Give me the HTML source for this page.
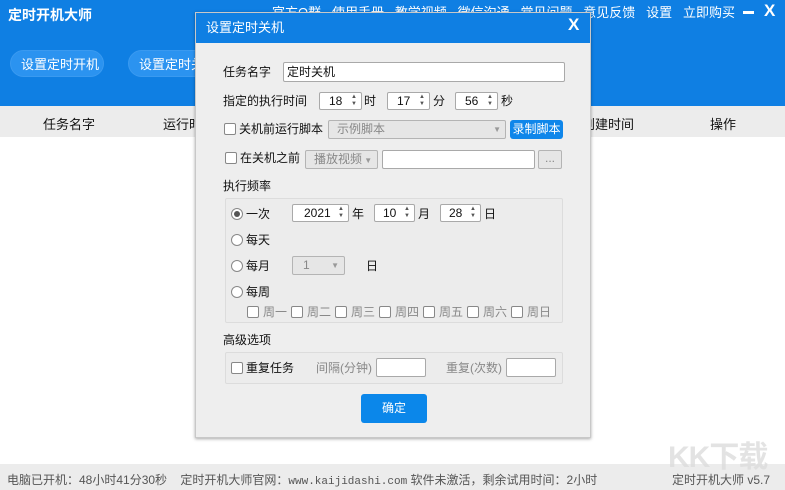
<!DOCTYPE html>
<html><head><meta charset="utf-8"><style>
*{margin:0;padding:0;box-sizing:border-box}
body{width:785px;height:490px;overflow:hidden;background:#fff;font-family:"Liberation Sans","Noto Sans CJK SC",sans-serif;font-size:12px;color:#111;position:relative}
.a{position:absolute;white-space:nowrap}
.dlg .a{margin-top:-1px}
.dlg .dt{margin-top:0}
.hdr{left:0;top:0;width:785px;height:106px;background:#0f7fe3}
.th{left:0;top:106px;width:785px;height:31px;background:#ececec}
.status{left:0;top:464px;width:785px;height:26px;background:#ececec;color:#555;font-size:12px}
.pill{height:27px;border-radius:14px;background:#2b93f0;color:#fff;font-size:13px;line-height:27px;padding-left:10px;border:1px solid #3a9af0}
.dlg{left:195px;top:12px;width:396px;height:426px;background:#eeeeee;border:1px solid #c8c8c8;box-shadow:0 1px 3px rgba(0,0,0,.35)}
.dt{left:0;top:0;width:394px;height:30px;background:#0f7fe3;color:#fff;font-size:13px;line-height:30px;padding-left:10px}
.in{background:#fff;border:1px solid #a9a9a9;border-radius:2px}
.spin{background:#fff;border:1px solid #a9a9a9;border-radius:2px;height:18px;line-height:16px;font-size:12px}
.spin i{position:absolute;right:4px;top:1px;font-style:normal;font-size:6px;line-height:7px;color:#555}
.cb{width:12px;height:12px;background:#fff;border:1px solid #888;border-radius:2px}
.rb{width:12px;height:12px;background:#fff;border:1px solid #888;border-radius:50%}
.sel{background:#e6e6e6;border:1px solid #b4b4b4;border-radius:2px;color:#888;font-size:12px}
.grp{border:1px solid #dcdcdc;border-radius:2px;background:#ececec}
.gray{color:#888}
</style></head><body>
<div class="a hdr"></div>
<div class="a" style="left:8px;top:5px;color:#fff;font-size:14px;font-weight:bold;line-height:20px">定时开机大师</div>
<div class="a" style="left:272px;top:4px;color:#fff;font-size:13px;line-height:18px;word-spacing:0">官方Q群&nbsp;&nbsp;&nbsp;使用手册&nbsp;&nbsp;&nbsp;教学视频&nbsp;&nbsp;&nbsp;微信沟通&nbsp;&nbsp;&nbsp;常见问题&nbsp;&nbsp;&nbsp;意见反馈&nbsp;&nbsp;&nbsp;设置&nbsp;&nbsp;&nbsp;立即购买</div>
<div class="a" style="left:743px;top:11px;width:11px;height:3px;background:#fff"></div>
<div class="a" style="left:764px;top:1px;color:#fff;font-size:17px;font-weight:bold">X</div>
<div class="a pill" style="left:10px;top:50px;width:94px">设置定时开机</div>
<div class="a pill" style="left:128px;top:50px;width:94px">设置定时关机</div>
<div class="a th"></div>
<div class="a" style="left:43px;top:114px;font-size:13px">任务名字</div>
<div class="a" style="left:163px;top:114px;font-size:13px">运行时间</div>
<div class="a" style="left:582px;top:114px;font-size:13px">创建时间</div>
<div class="a" style="left:710px;top:114px;font-size:13px">操作</div>
<div class="a status"></div>
<div class="a" style="left:7px;top:471px;color:#555;font-size:12px">电脑已开机：48小时41分30秒&nbsp;&nbsp;&nbsp;&nbsp;定时开机大师官网：<span style="font-family:'Liberation Mono',monospace;font-size:11px">www.kaijidashi.com</span> 软件未激活，剩余试用时间：2小时</div>
<div class="a" style="left:672px;top:471px;color:#555;font-size:12px">定时开机大师 v5.7</div>
<div class="a" style="left:668px;top:432px;color:#ddd;font-size:30px;font-weight:bold;opacity:.8;letter-spacing:-1px">KK下载</div>

<div class="a dlg">
 <div class="a dt">设置定时关机</div>
 <div class="a" style="left:372px;top:3px;color:#fff;font-size:17px;font-weight:bold">X</div>
 <div class="a" style="left:27px;top:51px;font-size:12px">任务名字</div>
 <div class="a in" style="left:87px;top:50px;width:282px;height:20px;padding-left:3px;line-height:18px;font-size:12px">定时关机</div>
 <div class="a" style="left:27px;top:80px">指定的执行时间</div>
 <div class="a spin" style="left:123px;top:80px;width:43px;padding-left:9px">18<i>▲<br>▼</i></div>
 <div class="a" style="left:168px;top:80px">时</div>
 <div class="a spin" style="left:191px;top:80px;width:43px;padding-left:9px">17<i>▲<br>▼</i></div>
 <div class="a" style="left:237px;top:80px">分</div>
 <div class="a spin" style="left:259px;top:80px;width:43px;padding-left:9px">56<i>▲<br>▼</i></div>
 <div class="a" style="left:305px;top:80px">秒</div>
 <div class="a cb" style="left:28px;top:111px"></div>
 <div class="a" style="left:43px;top:108px">关机前运行脚本</div>
 <div class="a sel" style="left:132px;top:108px;width:178px;height:19px;line-height:17px;padding-left:8px">示例脚本<span style="position:absolute;right:4px;font-size:8px;color:#999">▼</span></div>
 <div class="a" style="left:314px;top:108px;width:53px;height:19px;background:#0f86ea;border-radius:3px;color:#fff;font-size:12px;line-height:19px;text-align:center">录制脚本</div>
 <div class="a cb" style="left:29px;top:140px"></div>
 <div class="a" style="left:44px;top:137px">在关机之前</div>
 <div class="a sel" style="left:109px;top:138px;width:73px;height:19px;line-height:17px;padding-left:8px">播放视频<span style="font-size:8px;color:#999"> ▼</span></div>
 <div class="a in" style="left:186px;top:138px;width:153px;height:19px"></div>
 <div class="a sel" style="left:342px;top:138px;width:24px;height:19px;line-height:15px;text-align:center">...</div>
 <div class="a" style="left:27px;top:165px">执行频率</div>
 <div class="a grp" style="left:29px;top:186px;width:338px;height:125px"></div>
 <div class="a rb" style="left:35px;top:196px"></div><div class="a" style="left:38px;top:199px;width:6px;height:6px;border-radius:50%;background:#555"></div>
 <div class="a" style="left:50px;top:193px">一次</div>
 <div class="a spin" style="left:96px;top:192px;width:57px;padding-left:11px">2021<i>▲<br>▼</i></div>
 <div class="a" style="left:156px;top:193px">年</div>
 <div class="a spin" style="left:178px;top:192px;width:41px;padding-left:8px">10<i>▲<br>▼</i></div>
 <div class="a" style="left:222px;top:193px">月</div>
 <div class="a spin" style="left:244px;top:192px;width:41px;padding-left:8px">28<i>▲<br>▼</i></div>
 <div class="a" style="left:288px;top:193px">日</div>
 <div class="a rb" style="left:35px;top:222px"></div><div class="a" style="left:50px;top:219px">每天</div>
 <div class="a rb" style="left:35px;top:248px"></div><div class="a" style="left:50px;top:245px">每月</div>
 <div class="a sel" style="left:96px;top:244px;width:53px;height:19px;line-height:17px;padding-left:10px">1<span style="position:absolute;right:5px;font-size:8px;color:#999">▼</span></div>
 <div class="a" style="left:170px;top:245px">日</div>
 <div class="a rb" style="left:35px;top:274px"></div><div class="a" style="left:50px;top:271px">每周</div>
 <div class="a cb" style="left:51px;top:294px"></div><div class="a gray" style="left:67px;top:291px">周一</div>
 <div class="a cb" style="left:95px;top:294px"></div><div class="a gray" style="left:111px;top:291px">周二</div>
 <div class="a cb" style="left:139px;top:294px"></div><div class="a gray" style="left:155px;top:291px">周三</div>
 <div class="a cb" style="left:183px;top:294px"></div><div class="a gray" style="left:199px;top:291px">周四</div>
 <div class="a cb" style="left:227px;top:294px"></div><div class="a gray" style="left:243px;top:291px">周五</div>
 <div class="a cb" style="left:271px;top:294px"></div><div class="a gray" style="left:287px;top:291px">周六</div>
 <div class="a cb" style="left:315px;top:294px"></div><div class="a gray" style="left:331px;top:291px">周日</div>
 <div class="a" style="left:27px;top:319px">高级选项</div>
 <div class="a grp" style="left:29px;top:340px;width:338px;height:32px"></div>
 <div class="a cb" style="left:35px;top:350px"></div><div class="a" style="left:50px;top:347px">重复任务</div>
 <div class="a gray" style="left:120px;top:347px">间隔(分钟)</div>
 <div class="a in" style="left:180px;top:346px;width:50px;height:19px"></div>
 <div class="a gray" style="left:250px;top:347px">重复(次数)</div>
 <div class="a in" style="left:310px;top:346px;width:50px;height:19px"></div>
 <div class="a" style="left:165px;top:382px;width:66px;height:29px;background:#0b87ea;border-radius:3px;color:#fff;line-height:29px;text-align:center">确定</div>
</div>
</body></html>
